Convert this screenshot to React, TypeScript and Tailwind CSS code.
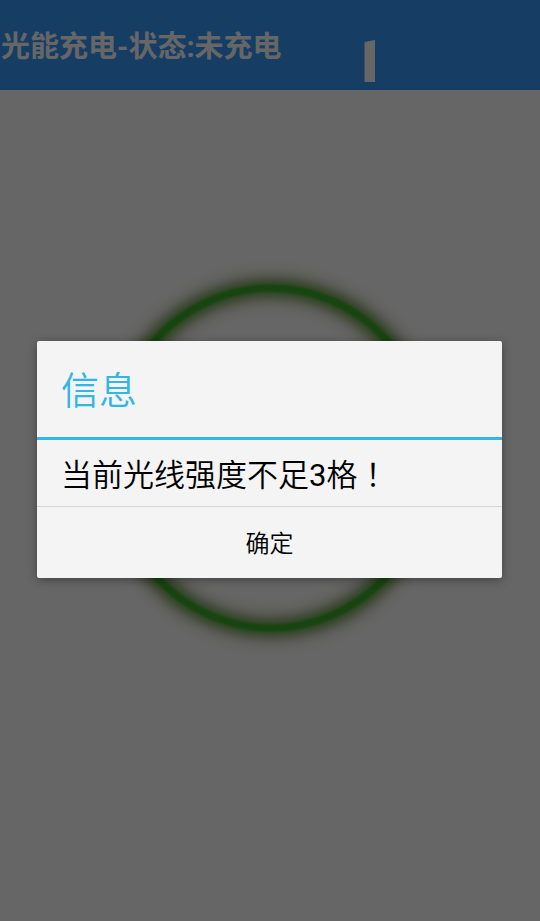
import { useState } from 'react';

function ChargeRing() {
  return (
    <svg viewBox="0 0 400 420" className="w-[400px] h-[420px] max-w-full" aria-hidden="true">
      <defs>
        <filter id="glow-wide" x="-20%" y="-20%" width="140%" height="140%">
          <feGaussianBlur stdDeviation="8" />
        </filter>
        <filter id="glow-near" x="-20%" y="-20%" width="140%" height="140%">
          <feGaussianBlur stdDeviation="5" />
        </filter>
        <filter id="edge" x="-20%" y="-20%" width="140%" height="140%">
          <feGaussianBlur stdDeviation="1" />
        </filter>
      </defs>
      <g fill="none">
        <ellipse cx="201" cy="210" rx="161" ry="170" stroke="#94986a" strokeWidth="26" opacity="0.6" filter="url(#glow-wide)" />
        <ellipse cx="201" cy="210" rx="161" ry="170" stroke="#5aa43c" strokeWidth="16" opacity="0.8" filter="url(#glow-near)" />
        <ellipse cx="201" cy="210" rx="161" ry="170" stroke="#38ac26" strokeWidth="7" filter="url(#edge)" />
      </g>
    </svg>
  );
}

function App() {
  const [open, setOpen] = useState(true);

  return (
    <div className="relative flex flex-col min-h-screen bg-white font-['Roboto','Noto_Sans_CJK_SC',sans-serif]">
      <header className="flex items-center h-[90px] bg-[#3898fa]">
        <h1 className="flex-1 pt-1 pl-px text-[29px] leading-9 font-bold text-white">光能充电-状态:未充电</h1>
        <svg viewBox="0 0 12 42" className="w-3 h-[42px] mt-8 mr-[164px]" aria-hidden="true">
          <path d="M0.5 2L11 0V42H0.5Z" fill="#fff" />
        </svg>
      </header>
      <main className="flex flex-1 items-center justify-center pb-24">
        <ChargeRing />
      </main>

      {open && (
        <div className="absolute inset-0 flex items-center justify-center pl-[37px] pr-[38px] pb-0.5 bg-black/60">
          <div
            role="dialog"
            aria-labelledby="dialog-title"
            className="w-full rounded-xs bg-[#f4f4f4] shadow-[0_2px_10px_rgba(0,0,0,0.35)]"
          >
            <h2 id="dialog-title" className="h-24 px-6 pt-1 text-[38px] leading-[92px] font-[350] text-[#33b5e5]">
              信息
            </h2>
            <div className="h-[3px] bg-[#33b5e5]" />
            <p className="h-[66px] px-6 text-[31px] leading-[66px] font-[350] text-black">
              当前光线强度不足<span className="font-normal">3</span>格
              <span className="font-['Noto_Sans_CJK_TC',sans-serif]">！</span>
            </p>
            <button
              type="button"
              onClick={() => setOpen(false)}
              className="w-full h-[72px] pt-0.5 border-t border-[#d5d5d5] text-2xl font-[350] text-black"
            >
              确定
            </button>
          </div>
        </div>
      )}
    </div>
  );
}

export default App;
